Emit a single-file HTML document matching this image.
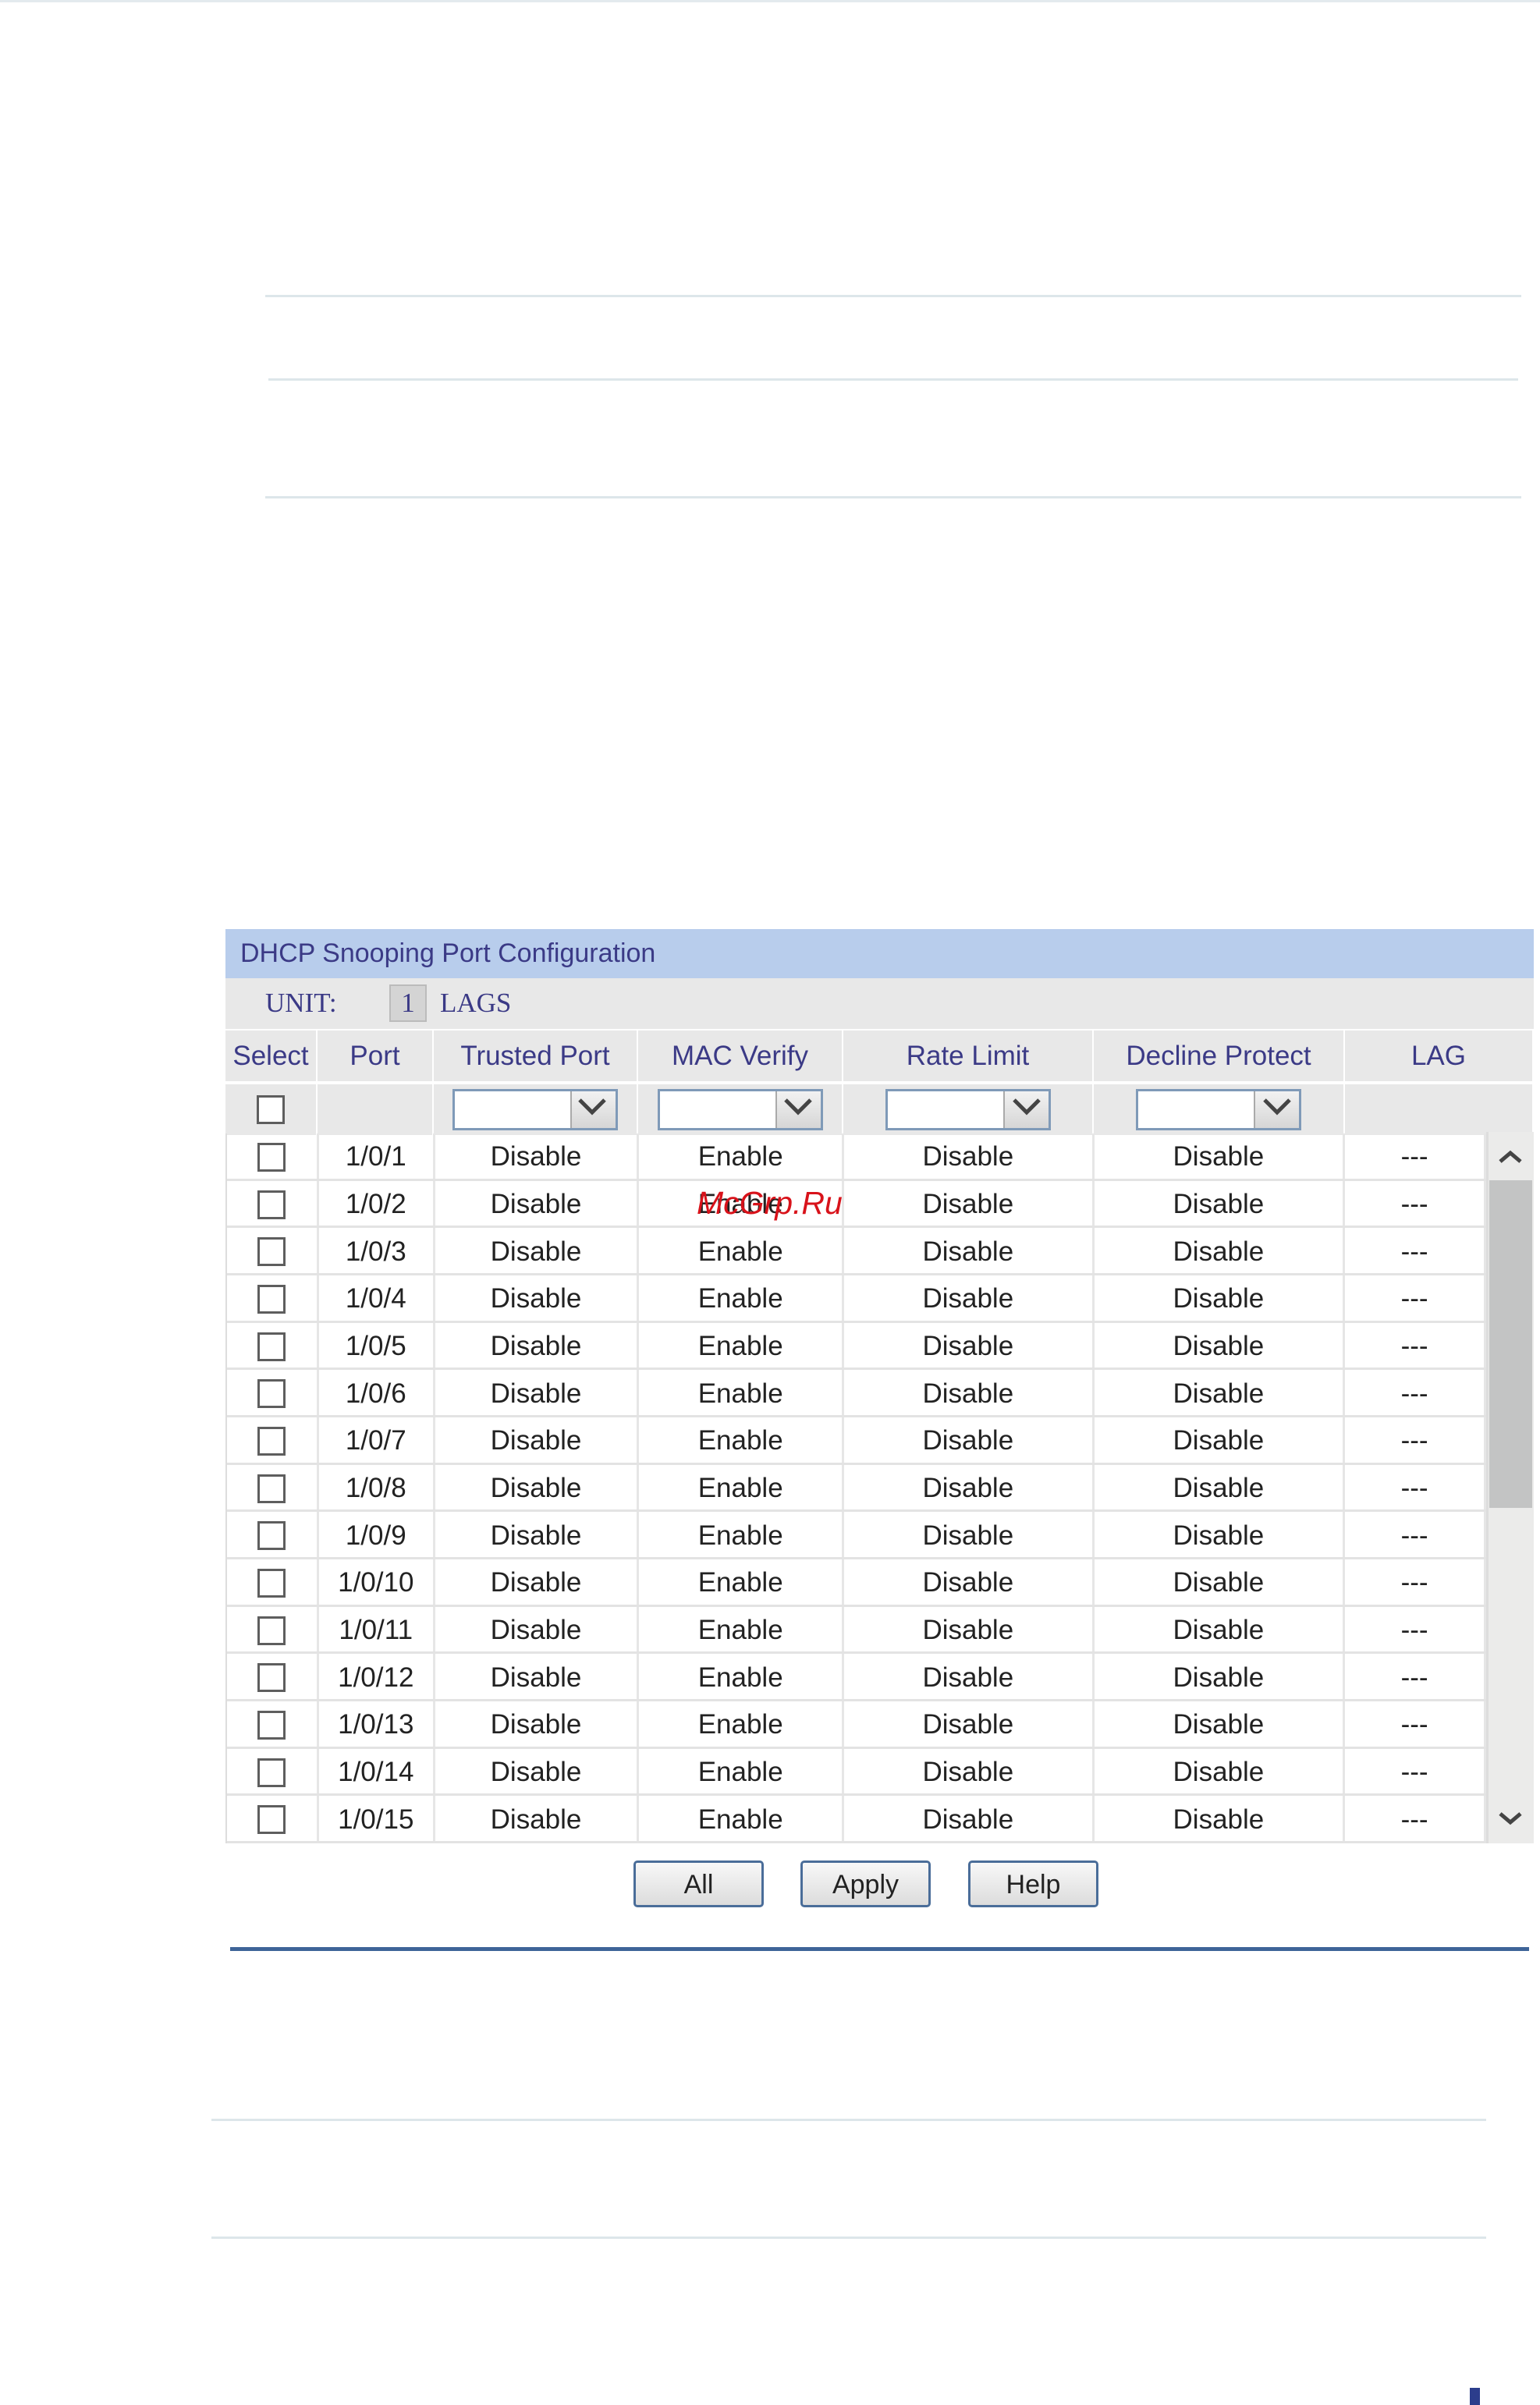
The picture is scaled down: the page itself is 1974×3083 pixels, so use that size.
<!DOCTYPE html>
<html><head><meta charset="utf-8"><style>
*{margin:0;padding:0;box-sizing:border-box}
body{width:1974px;height:3083px;background:#fff;position:relative;overflow:hidden;font-family:"Liberation Sans",Arial,sans-serif}
.a{position:absolute}
.hl{position:absolute;height:3px;background:#dde6ea}
.cols{position:absolute;left:289px;width:1677px;display:flex}
.cols>div{display:flex;align-items:center;justify-content:center;border-right:2px solid #fff}
.w1{width:118px}.w2{width:149px}.w3{width:262px}.w4{width:263px}.w5{width:321px}.w6{width:322px}.w7{width:242px}
.hdr div{color:#3b3a86;font-size:35px;height:65px;background:#e8e8e8}
.cb{width:36px;height:37px;border:3px solid #5e5e5e;background:#fff}
.sel{width:212px;height:53px;border:3px solid #7f9ab8;background:#fff;position:relative}
.sel i{position:absolute;right:0;top:0;width:58px;height:47px;background:linear-gradient(#f2f2f2,#d6d6d6);border-left:2px solid #aaa}
.rows{position:absolute;left:289px;top:1453px;width:1616px;height:910px;display:flex;flex-direction:column;border-left:2px solid #ddd}
.r{flex:1;display:flex;border-bottom:3px solid #e3e3e3}
.r>div{display:flex;align-items:center;justify-content:center;font-size:35px;color:#222;border-right:3px solid #e6e6e6;padding-top:3px}
.btn{position:absolute;top:2385px;width:167px;height:60px;border:3px solid #4a6d99;border-radius:5px;background:linear-gradient(#f8f8f8,#dcdcdc);font-size:34px;color:#222;display:flex;align-items:center;justify-content:center;padding-top:2px}
</style></head><body>
<div class="a" style="left:0;top:0;width:1974px;height:3px;background:#e3eaee"></div>
<div class="hl" style="left:340px;width:1610px;top:378px"></div>
<div class="hl" style="left:344px;width:1602px;top:485px"></div>
<div class="hl" style="left:340px;width:1610px;top:636px"></div>

<div class="a" style="left:289px;top:1191px;width:1677px;height:63px;background:#b8cdec;color:#3b3a86;font-size:34px;padding-left:19px;line-height:63px">DHCP Snooping Port Configuration</div>
<div class="a" style="left:289px;top:1254px;width:1677px;height:65px;background:#e8e8e8;font-family:'Liberation Serif',serif;font-size:35px;color:#3b3a86">
<span class="a" style="left:51px;top:12px">UNIT:</span>
<span class="a" style="left:210px;top:8px;width:48px;height:48px;background:#d4d4d4;border:2px solid #bbb;text-align:center;line-height:44px">1</span>
<span class="a" style="left:275px;top:12px">LAGS</span></div>
<div class="cols hdr" style="top:1321px"><div class="w1">Select</div><div class="w2">Port</div><div class="w3">Trusted Port</div><div class="w4">MAC Verify</div><div class="w5">Rate Limit</div><div class="w6">Decline Protect</div><div class="w7">LAG</div></div>
<div class="cols hdr" style="top:1388px;border-top:2px solid #fff"><div class="w1"><span class="cb"></span></div><div class="w2"></div><div class="w3"><span class="sel"><i></i></span></div><div class="w4"><span class="sel"><i></i></span></div><div class="w5"><span class="sel"><i></i></span></div><div class="w6"><span class="sel"><i></i></span></div><div class="w7"></div></div>
<svg class="a" style="left:0;top:0" width="1974" height="1460"><g fill="none" stroke="#444" stroke-width="5"><path d="M743 1410l16 16 16-16"/><path d="M1007 1410l16 16 16-16"/><path d="M1300 1410l16 16 16-16"/><path d="M1621 1410l16 16 16-16"/></g></svg>

<div class="rows">
<div class="r"><div class="w1"><span class="cb"></span></div><div class="w2">1/0/1</div><div class="w3">Disable</div><div class="w4">Enable</div><div class="w5">Disable</div><div class="w6">Disable</div><div style="width:181px">---</div></div>
<div class="r"><div class="w1"><span class="cb"></span></div><div class="w2">1/0/2</div><div class="w3">Disable</div><div class="w4">Enable</div><div class="w5">Disable</div><div class="w6">Disable</div><div style="width:181px">---</div></div>
<div class="r"><div class="w1"><span class="cb"></span></div><div class="w2">1/0/3</div><div class="w3">Disable</div><div class="w4">Enable</div><div class="w5">Disable</div><div class="w6">Disable</div><div style="width:181px">---</div></div>
<div class="r"><div class="w1"><span class="cb"></span></div><div class="w2">1/0/4</div><div class="w3">Disable</div><div class="w4">Enable</div><div class="w5">Disable</div><div class="w6">Disable</div><div style="width:181px">---</div></div>
<div class="r"><div class="w1"><span class="cb"></span></div><div class="w2">1/0/5</div><div class="w3">Disable</div><div class="w4">Enable</div><div class="w5">Disable</div><div class="w6">Disable</div><div style="width:181px">---</div></div>
<div class="r"><div class="w1"><span class="cb"></span></div><div class="w2">1/0/6</div><div class="w3">Disable</div><div class="w4">Enable</div><div class="w5">Disable</div><div class="w6">Disable</div><div style="width:181px">---</div></div>
<div class="r"><div class="w1"><span class="cb"></span></div><div class="w2">1/0/7</div><div class="w3">Disable</div><div class="w4">Enable</div><div class="w5">Disable</div><div class="w6">Disable</div><div style="width:181px">---</div></div>
<div class="r"><div class="w1"><span class="cb"></span></div><div class="w2">1/0/8</div><div class="w3">Disable</div><div class="w4">Enable</div><div class="w5">Disable</div><div class="w6">Disable</div><div style="width:181px">---</div></div>
<div class="r"><div class="w1"><span class="cb"></span></div><div class="w2">1/0/9</div><div class="w3">Disable</div><div class="w4">Enable</div><div class="w5">Disable</div><div class="w6">Disable</div><div style="width:181px">---</div></div>
<div class="r"><div class="w1"><span class="cb"></span></div><div class="w2">1/0/10</div><div class="w3">Disable</div><div class="w4">Enable</div><div class="w5">Disable</div><div class="w6">Disable</div><div style="width:181px">---</div></div>
<div class="r"><div class="w1"><span class="cb"></span></div><div class="w2">1/0/11</div><div class="w3">Disable</div><div class="w4">Enable</div><div class="w5">Disable</div><div class="w6">Disable</div><div style="width:181px">---</div></div>
<div class="r"><div class="w1"><span class="cb"></span></div><div class="w2">1/0/12</div><div class="w3">Disable</div><div class="w4">Enable</div><div class="w5">Disable</div><div class="w6">Disable</div><div style="width:181px">---</div></div>
<div class="r"><div class="w1"><span class="cb"></span></div><div class="w2">1/0/13</div><div class="w3">Disable</div><div class="w4">Enable</div><div class="w5">Disable</div><div class="w6">Disable</div><div style="width:181px">---</div></div>
<div class="r"><div class="w1"><span class="cb"></span></div><div class="w2">1/0/14</div><div class="w3">Disable</div><div class="w4">Enable</div><div class="w5">Disable</div><div class="w6">Disable</div><div style="width:181px">---</div></div>
<div class="r"><div class="w1"><span class="cb"></span></div><div class="w2">1/0/15</div><div class="w3">Disable</div><div class="w4">Enable</div><div class="w5">Disable</div><div class="w6">Disable</div><div style="width:181px">---</div></div>
</div>
<div class="a" style="left:1905px;top:1451px;width:61px;height:912px;background:#ebebea;border-left:3px solid #ddd"></div>
<div class="a" style="left:1909px;top:1513px;width:55px;height:420px;background:#c3c4c4"></div>
<svg class="a" style="left:1905px;top:1451px" width="61" height="912"><g fill="none" stroke="#444" stroke-width="5"><path d="M18 38l13-11 13 11"/><path d="M18 874l13 11 13-11"/></g></svg>

<div class="a" style="left:893px;top:1519px;color:#d8121a;font-style:italic;font-size:41px">McGrp.Ru</div>

<div class="btn" style="left:812px">All</div>
<div class="btn" style="left:1026px">Apply</div>
<div class="btn" style="left:1241px">Help</div>

<div class="a" style="left:295px;top:2496px;width:1665px;height:5px;background:#3e6498"></div>
<div class="hl" style="left:271px;width:1634px;top:2716px"></div>
<div class="hl" style="left:271px;width:1634px;top:2867px"></div>
<div class="a" style="left:1884px;top:3061px;width:13px;height:22px;background:#2c3d8c"></div>
</body></html>
